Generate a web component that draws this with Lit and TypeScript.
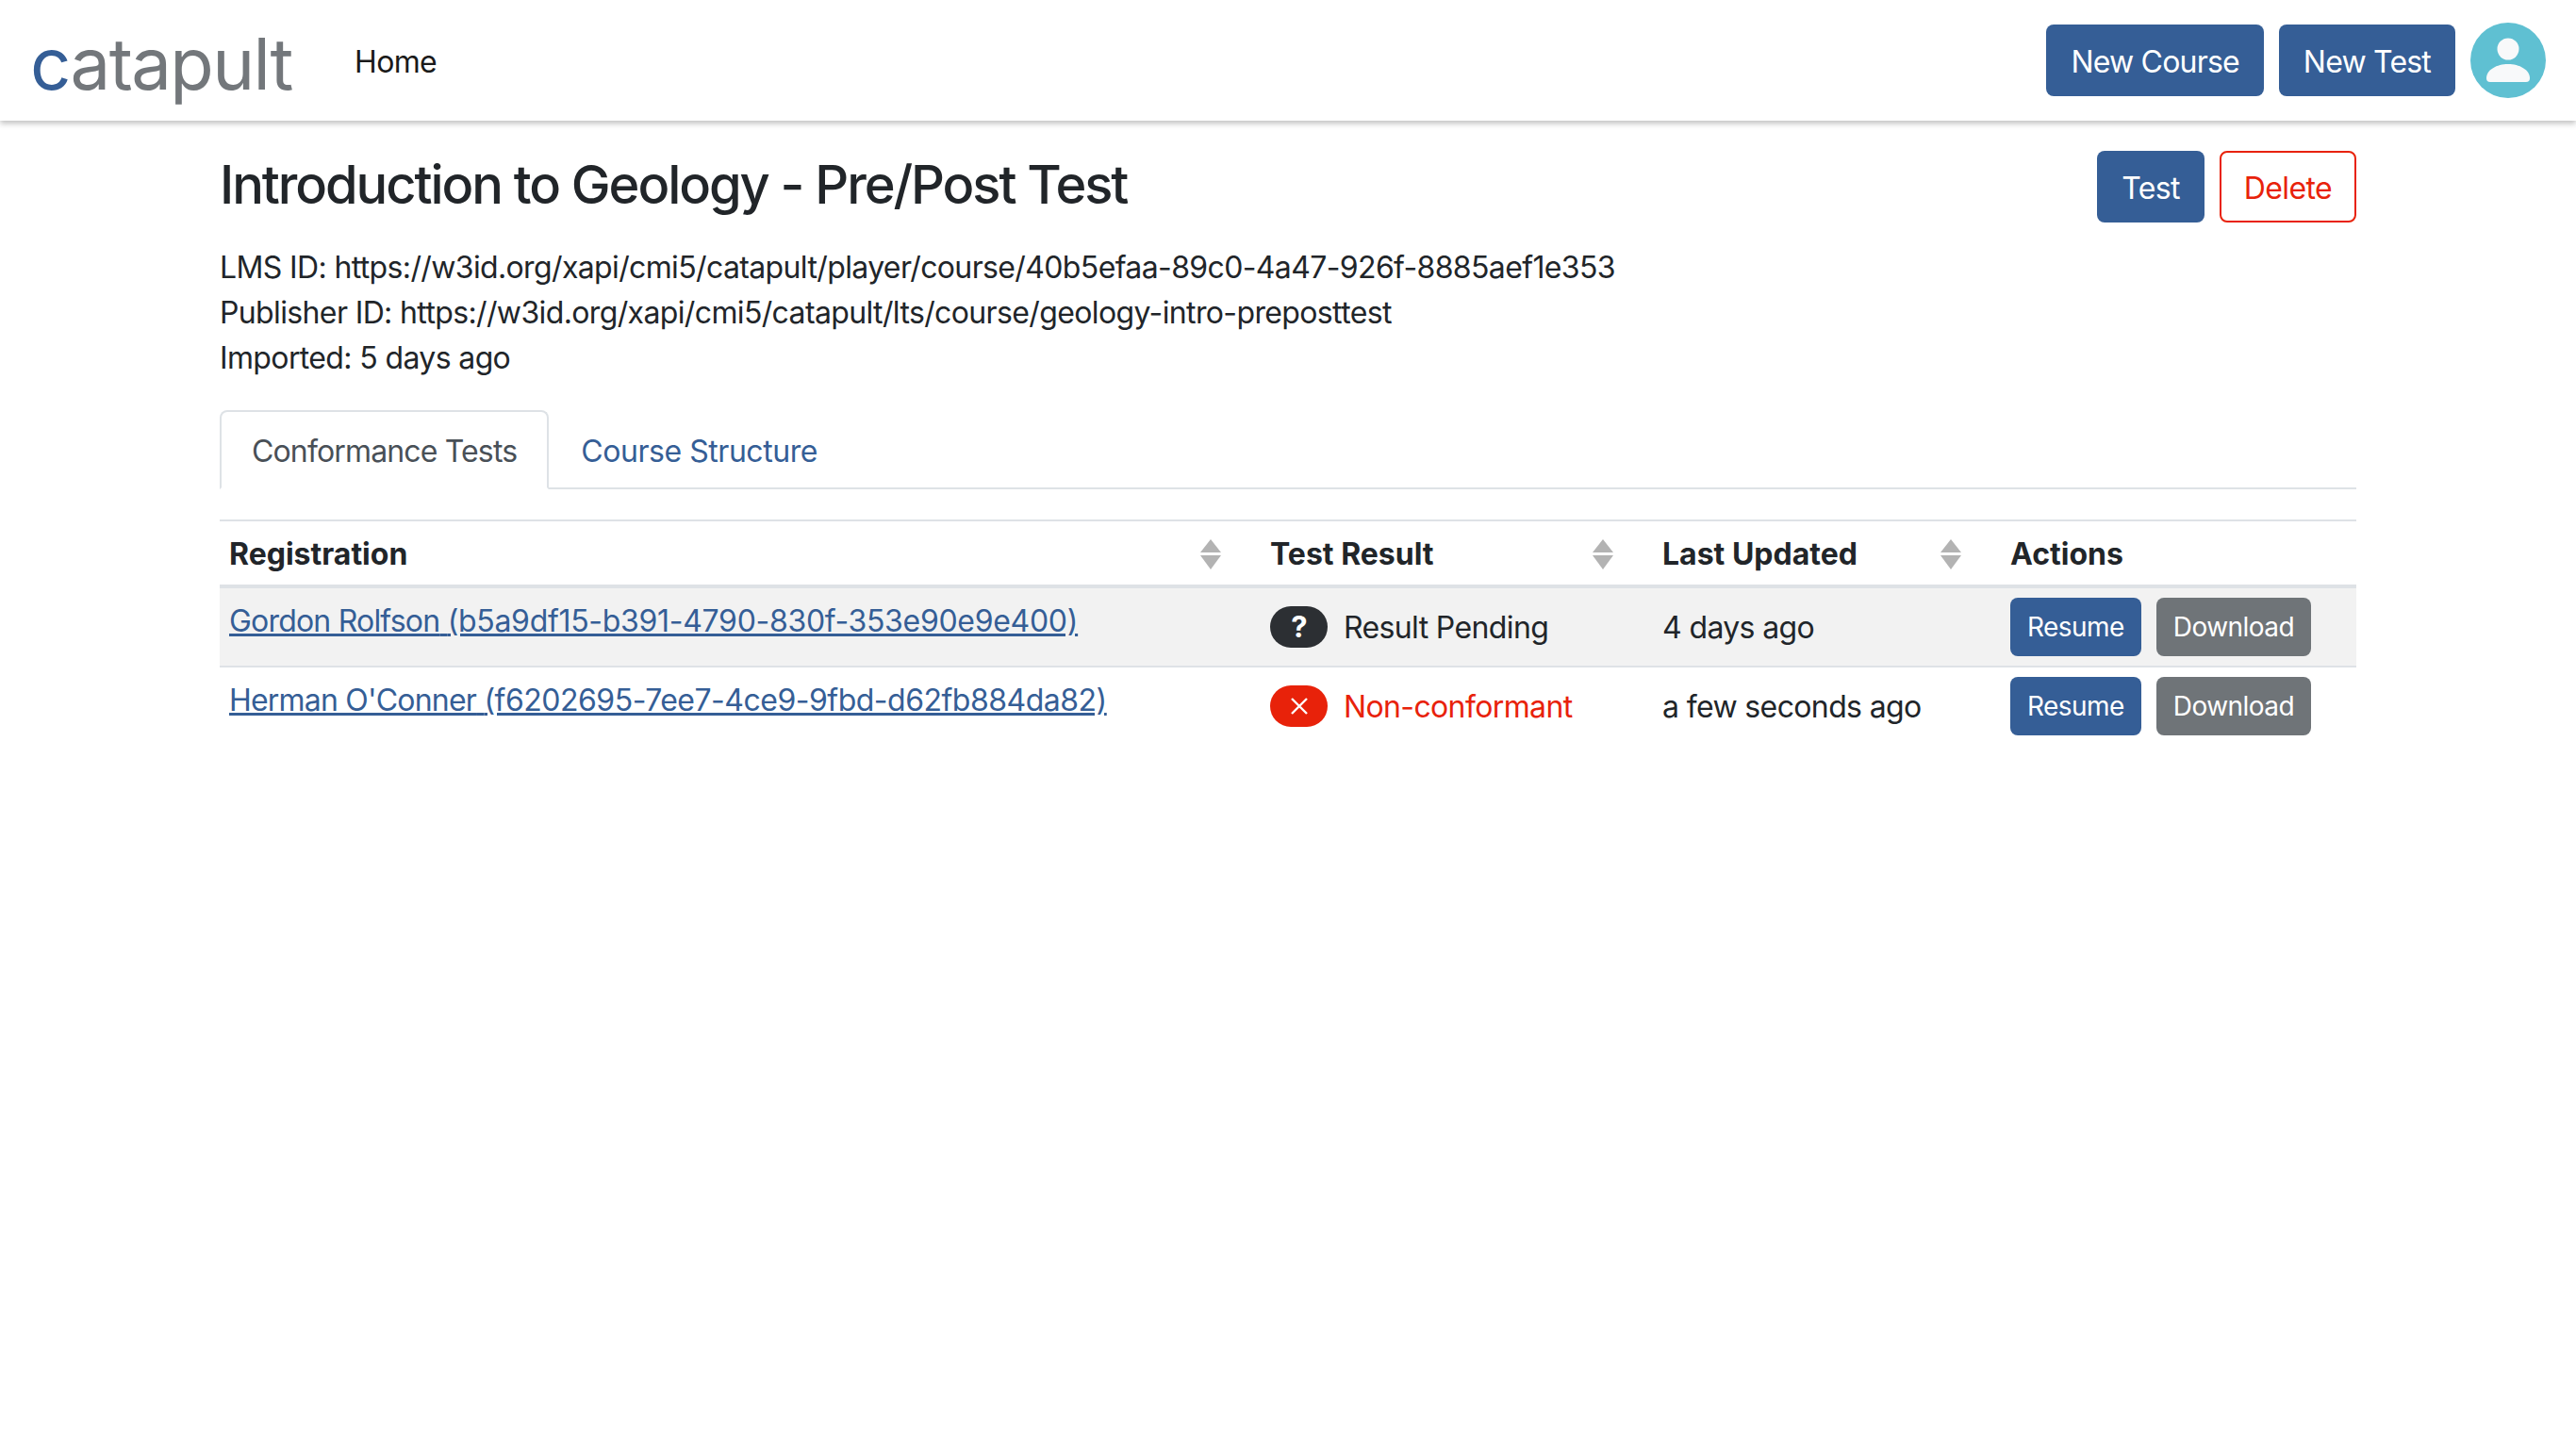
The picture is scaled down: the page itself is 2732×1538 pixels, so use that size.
import { LitElement, html, css } from 'lit';
import { customElement } from 'lit/decorators.js';

const rows = [
  {
    name: 'Gordon Rolfson',
    uuid: '(b5a9df15-b391-4790-830f-353e90e9e400)',
    uuidSpacing: -0.3,
    result: 'Result Pending',
    failed: false,
    updated: '4 days ago',
  },
  {
    name: "Herman O'Conner",
    uuid: '(f6202695-7ee7-4ce9-9fbd-d62fb884da82)',
    uuidSpacing: -0.5,
    result: 'Non-conformant',
    failed: true,
    updated: 'a few seconds ago',
  },
];

@customElement('app-root')
export class AppRoot extends LitElement {
  static styles = css`
    :host {
      display: block;
      min-height: 1538px;
      background: #fff;
      color: #212529;
      font-family: Inter, 'Liberation Sans', sans-serif;
      font-size: 32px;
      line-height: 48px;
      letter-spacing: -0.63px;
    }

    a {
      color: #355e96;
    }

    .navbar {
      display: flex;
      align-items: center;
      height: 128px;
      padding: 0 32px;
      box-shadow: 0 3px 6px rgba(0, 0, 0, 0.25);
    }

    .logo {
      width: 344px;
      padding-top: 6px;
      font-size: 76px;
      line-height: 128px;
      letter-spacing: -1.6px;
      color: #73777b;
    }

    .logo span {
      color: #355e96;
    }

    .home {
      padding-top: 3px;
      color: #1a1a1a;
      text-decoration: none;
    }

    .nav-actions {
      display: flex;
      align-items: center;
      gap: 16px;
      margin-left: auto;
      letter-spacing: -0.8px;
    }

    .btn {
      display: inline-block;
      box-sizing: border-box;
      height: 76px;
      padding: 14px 24px 10px;
      border: 2px solid transparent;
      border-radius: 8px;
      font: inherit;
      letter-spacing: inherit;
      background: #355e96;
      color: #fff;
    }

    .btn.outline {
      background: #fff;
      border-color: #e8220a;
      color: #e8220a;
    }

    .btn.small {
      height: 62px;
      padding: 8px 16px;
      font-size: 28px;
      line-height: 42px;
      letter-spacing: -0.55px;
    }

    .btn.grey {
      background: #6f7478;
    }

    .avatar {
      display: block;
      width: 80px;
      height: 80px;
    }

    main {
      width: 2266px;
      margin: 0 0 0 233px;
      padding-top: 32px;
    }

    .title-row {
      display: flex;
      justify-content: space-between;
      align-items: center;
      margin-bottom: 24px;
    }

    h1 {
      margin: 0;
      padding-bottom: 3px;
      font-size: 56px;
      line-height: 73px;
      font-weight: 500;
      letter-spacing: -2.07px;
    }

    .title-actions {
      display: flex;
      gap: 16px;
      letter-spacing: -0.63px;
    }

    .info div {
      height: 48px;
    }

    .tabs {
      display: flex;
      margin-top: 31px;
      border-bottom: 2px solid #dee2e6;
      letter-spacing: -0.45px;
    }

    .tab {
      padding: 18px 32px 14px;
      border: 2px solid transparent;
      border-radius: 8px 8px 0 0;
      margin-bottom: -2px;
      text-decoration: none;
    }

    .tab.active {
      color: #495057;
      background: #fff;
      border-color: #dee2e6 #dee2e6 #fff;
      letter-spacing: -0.85px;
    }

    table {
      width: 100%;
      margin-top: 32px;
      table-layout: fixed;
      border-collapse: separate;
      border-spacing: 0;
    }

    .col-reg { width: 1104px; }
    .col-result { width: 416px; }
    .col-updated { width: 369px; }

    th {
      padding: 11px 10px 8px;
      border-top: 2px solid #dee2e6;
      border-bottom: 4px solid #dee2e6;
      text-align: left;
      font-weight: 700;
      letter-spacing: 0;
    }

    .th-inner {
      display: flex;
      align-items: center;
      justify-content: space-between;
      padding-right: 32px;
    }

    .sort {
      display: block;
      width: 22px;
      height: 32px;
    }

    td {
      padding: 10px;
      vertical-align: middle;
      border-bottom: 2px solid #dee2e6;
      white-space: nowrap;
    }

    tr:nth-child(odd) td {
      background: #f2f2f2;
    }

    tr:last-child td {
      border-bottom: none;
    }

    td.link-cell {
      padding-top: 11px;
      vertical-align: top;
    }

    .person {
      letter-spacing: -0.8px;
    }

    .result {
      display: flex;
      align-items: center;
      gap: 17px;
    }

    .result.failed {
      color: #e8220a;
    }

    .label {
      display: inline-block;
      padding-top: 2px;
    }

    .badge {
      display: flex;
      align-items: center;
      justify-content: center;
      width: 61px;
      height: 44px;
      border-radius: 22px;
      background: #2c2f33;
      color: #fff;
      font-size: 31px;
      font-weight: 700;
      line-height: 44px;
    }

    .failed .badge {
      background: #e8220a;
    }

    .badge svg {
      display: block;
      width: 20px;
      height: 20px;
    }

    .actions {
      display: flex;
      gap: 16px;
    }
  `;

  private sortIcon() {
    return html`<svg class="sort" viewBox="0 0 22 32" fill="#b3b3b3">
      <path d="M11 0L22 14H0Z"></path>
      <path d="M0 17H22L11 32Z"></path>
    </svg>`;
  }

  render() {
    return html`
      <header class="navbar">
        <div class="logo"><span>c</span>atapult</div>
        <a class="home" href="#">Home</a>
        <div class="nav-actions">
          <button class="btn">New Course</button>
          <button class="btn">New Test</button>
          <svg class="avatar" viewBox="0 0 80 80">
            <circle cx="40" cy="40" r="40" fill="#5fc0d2"></circle>
            <circle cx="40" cy="28" r="11.5" fill="#f8f9fa"></circle>
            <path d="M21 63Q17 63 17 59C17 50 28 44 40 44C52 44 63 50 63 59Q63 63 59 63Z" fill="#f8f9fa"></path>
          </svg>
        </div>
      </header>
      <main>
        <div class="title-row">
          <h1>Introduction to Geology - Pre/Post Test</h1>
          <div class="title-actions">
            <button class="btn">Test</button>
            <button class="btn outline">Delete</button>
          </div>
        </div>
        <div class="info">
          <div>LMS ID: https://w3id.org/xapi/cmi5/catapult/player/course/40b5efaa-89c0-4a47-926f-8885aef1e353</div>
          <div>Publisher ID: https://w3id.org/xapi/cmi5/catapult/lts/course/geology-intro-preposttest</div>
          <div>Imported: 5 days ago</div>
        </div>
        <nav class="tabs">
          <a class="tab active" href="#">Conformance Tests</a>
          <a class="tab" href="#">Course Structure</a>
        </nav>
        <table>
          <colgroup>
            <col class="col-reg" />
            <col class="col-result" />
            <col class="col-updated" />
            <col />
          </colgroup>
          <thead>
            <tr>
              <th><div class="th-inner">Registration ${this.sortIcon()}</div></th>
              <th><div class="th-inner">Test Result ${this.sortIcon()}</div></th>
              <th><div class="th-inner">Last Updated ${this.sortIcon()}</div></th>
              <th>Actions</th>
            </tr>
          </thead>
          <tbody>
            ${rows.map(
              (row) => html`
                <tr>
                  <td class="link-cell">
                    <a href="#"><span class="person">${row.name}</span> <span style="letter-spacing: ${row.uuidSpacing}px">${row.uuid}</span></a>
                  </td>
                  <td>
                    <div class="result ${row.failed ? 'failed' : ''}">
                      <span class="badge">
                        ${row.failed
                          ? html`<svg viewBox="0 0 20 20" stroke="#fff" stroke-width="2.4" fill="none">
                              <path d="M2 2L18 18M18 2L2 18"></path>
                            </svg>`
                          : '?'}
                      </span>
                      <span class="label">${row.result}</span>
                    </div>
                  </td>
                  <td><span class="label">${row.updated}</span></td>
                  <td>
                    <div class="actions">
                      <button class="btn small">Resume</button>
                      <button class="btn small grey">Download</button>
                    </div>
                  </td>
                </tr>
              `
            )}
          </tbody>
        </table>
      </main>
    `;
  }
}
